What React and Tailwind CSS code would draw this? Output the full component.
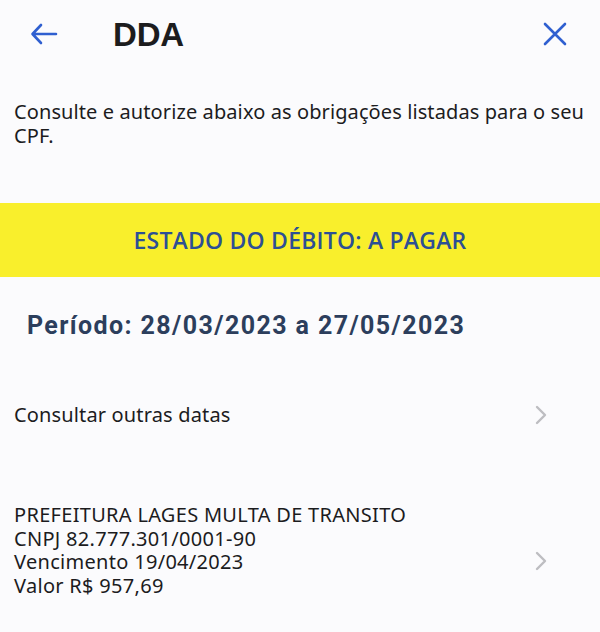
import React from "react";

function Chevron() {
  return (
    <svg width="14" height="20" viewBox="0 0 14 20" fill="none">
      <path d="M3 2l8 8-8 8" stroke="#bdbdc1" strokeWidth="2.4" strokeLinecap="round" strokeLinejoin="round" />
    </svg>
  );
}

export default function App() {
  return (
    <div className="w-[600px] h-[632px] bg-[#fbfbfd] text-[#1c1c1e] font-['Noto_Sans',sans-serif] overflow-hidden">
      {/* header */}
      <div className="flex items-center h-[68px] pl-[30px] pr-[32px]">
        <svg width="28" height="22" viewBox="0 0 28 22" fill="none">
          <path d="M26 11H3M11 2L2.5 11 11 20" stroke="#2f5fd0" strokeWidth="2.6" strokeLinecap="round" strokeLinejoin="round" />
        </svg>
        <h1 className="ml-[55px] text-[33px] font-bold font-['Liberation_Sans',sans-serif] tracking-[-0.2px] leading-none">DDA</h1>
        <svg className="ml-auto" width="26" height="26" viewBox="0 0 26 26" fill="none">
          <path d="M3 3l20 20M23 3L3 23" stroke="#2f5fd0" strokeWidth="2.6" strokeLinecap="round" />
        </svg>
      </div>

      <p className="mt-[32px] pl-[14px] text-[20px] leading-[24px] tracking-[0.1px]">
        <span className="whitespace-nowrap">Consulte e autorize abaixo as obrigações listadas para o seu</span>
        <br />
        CPF.
      </p>

      {/* status banner */}
      <div className="mt-[55px] h-[74px] bg-[#f9ef2c] flex items-center justify-center">
        <span className="text-[23px] font-semibold text-[#2d4f94] font-['Open_Sans',sans-serif] tracking-[0.2px]">
          ESTADO DO DÉBITO: A PAGAR
        </span>
      </div>

      <div className="mt-[34px] pl-[27px] text-[25px] font-bold text-[#2c3e5c] font-['Roboto',sans-serif] tracking-[1.4px] leading-[30px]">
        Período: 28/03/2023 a 27/05/2023
      </div>

      {/* consultar */}
      <div className="mt-[62px] flex items-center pl-[14px] pr-[52px]">
        <span className="text-[20px] leading-[24px] tracking-[0.15px]">Consultar outras datas</span>
        <span className="ml-auto"><Chevron /></span>
      </div>

      {/* item */}
      <div className="mt-[76px] flex items-center pl-[14px] pr-[52px]">
        <div className="text-[20px] leading-[23.5px] tracking-[0.3px]">
          <div>PREFEITURA LAGES MULTA DE TRANSITO</div>
          <div>CNPJ 82.777.301/0001-90</div>
          <div>Vencimento 19/04/2023</div>
          <div>Valor R$ 957,69</div>
        </div>
        <span className="ml-auto mt-[22px]"><Chevron /></span>
      </div>
    </div>
  );
}
